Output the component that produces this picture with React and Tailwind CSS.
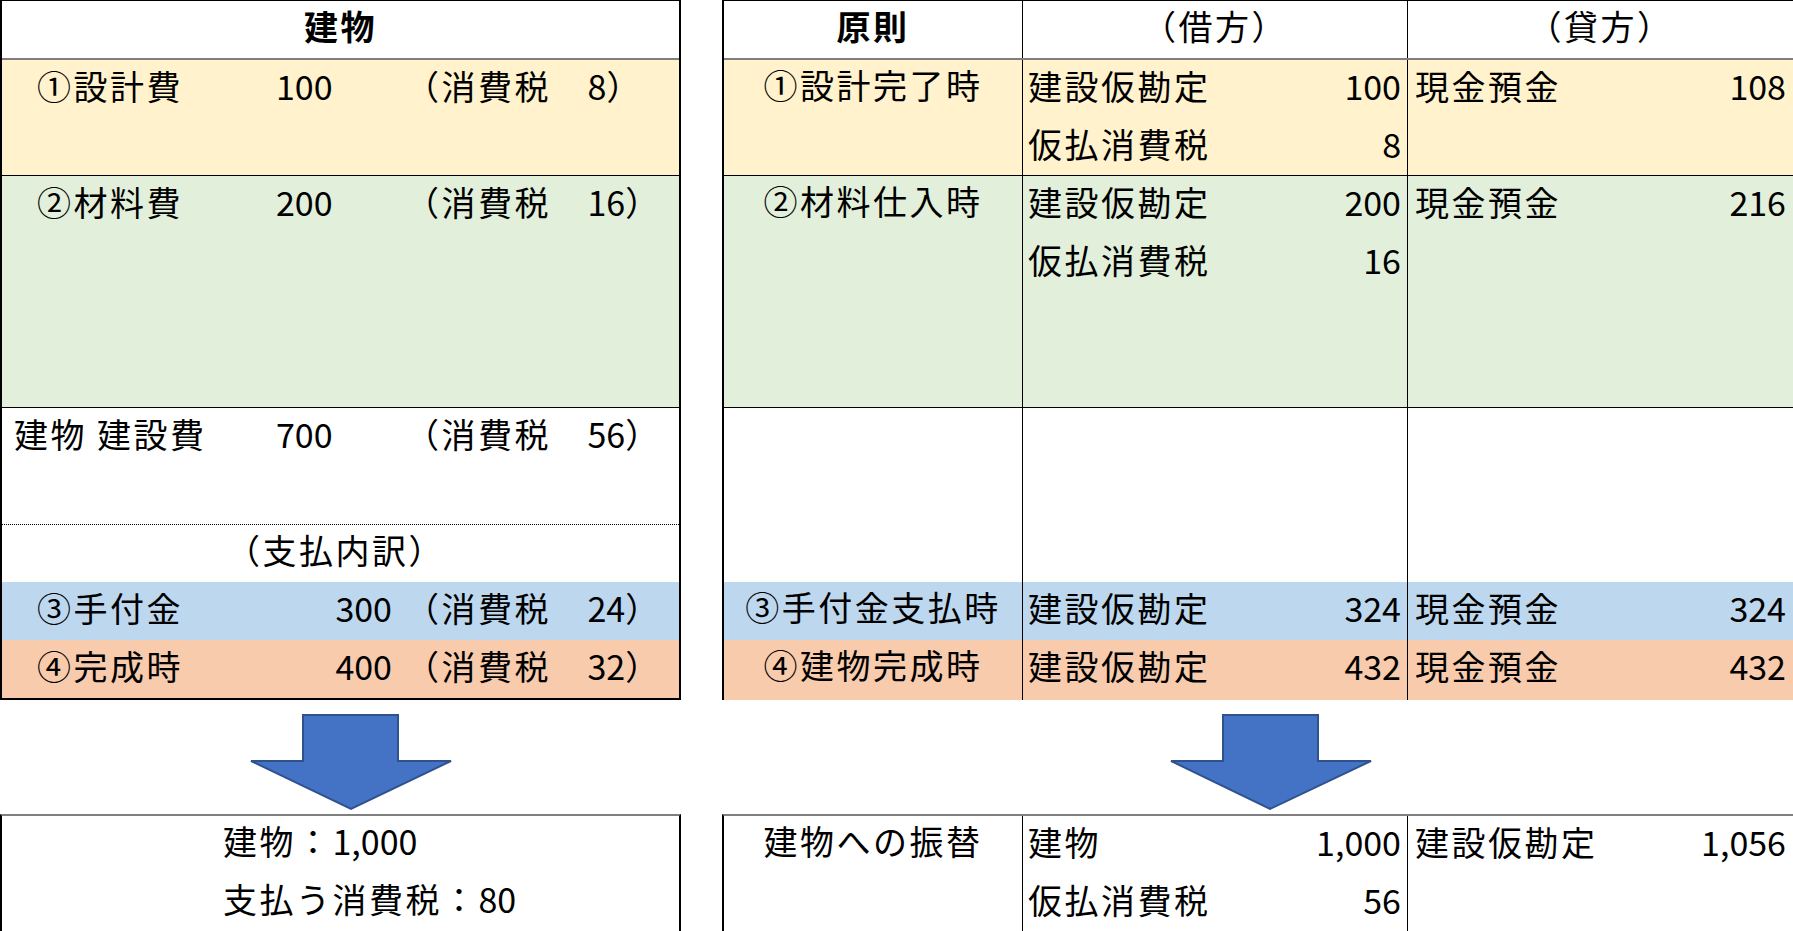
import React from "react";

function Arrow({ shaftL, shaftR, headL, headR, tip }) {
  const pts = `${shaftL},15 ${shaftR},15 ${shaftR},61 ${headR},61 ${tip},109 ${headL},61 ${shaftL},61`;
  return (
    <svg width="100%" height="100%" className="block">
      <polygon points={pts} fill="#4472C4" stroke="#2F528F" strokeWidth="2" strokeLinejoin="miter" />
    </svg>
  );
}

function Num({ children }) {
  return <span className="tracking-normal">{children}</span>;
}

function Tax({ n }) {
  return (
    <span>
      （消費税　<Num>{n}</Num>）
    </span>
  );
}

function LeftTable() {
  return (
    <div className="w-[681px] shrink-0 flex flex-col">
      <div className="border-x-2 border-t border-b-2 border-black">
        <div className="h-[59px] pb-[8px] border-b-2 border-[#7f7f7f] flex items-center justify-center font-bold bg-white">
          建物
        </div>
        <div className="h-[116px] bg-[#fff2cc] border-b border-black">
          <div className="flex h-[58px] pb-[8px] items-center">
            <span className="w-[274px] pl-[35px]">①設計費</span>
            <span className="w-[129px] tracking-normal">100</span>
            <Tax n="8" />
          </div>
        </div>
        <div className="h-[232px] bg-[#e2efda] border-b border-black">
          <div className="flex h-[58px] pb-[8px] items-center">
            <span className="w-[274px] pl-[35px]">②材料費</span>
            <span className="w-[129px] tracking-normal">200</span>
            <Tax n="16" />
          </div>
        </div>
        <div className="h-[117px] bg-white border-b border-dotted border-black">
          <div className="flex h-[58px] pb-[8px] items-center">
            <span className="w-[274px] pl-[12px]">建物 建設費</span>
            <span className="w-[129px] tracking-normal">700</span>
            <Tax n="56" />
          </div>
        </div>
        <div className="h-[57px] pb-[8px] bg-white flex items-center pl-[224px]">（支払内訳）</div>
        <div className="h-[58px] pb-[8px] bg-[#bdd7ee] flex items-center">
          <span className="w-[274px] pl-[35px]">③手付金</span>
          <span className="w-[129px] text-right pr-[13px] tracking-normal">300</span>
          <Tax n="24" />
        </div>
        <div className="h-[58px] pb-[8px] bg-[#f8cbad] flex items-center">
          <span className="w-[274px] pl-[35px]">④完成時</span>
          <span className="w-[129px] text-right pr-[13px] tracking-normal">400</span>
          <Tax n="32" />
        </div>
      </div>
      <div className="h-[114px]">
        <Arrow shaftL={303} shaftR={398} headL={251} headR={451} tip={351} />
      </div>
      <div className="flex-1 border-t-2 border-[#7f7f7f] border-x-2 border-x-black pl-[221px]">
        <div className="h-[58px] leading-[50px]">
          建物：<Num>1,000</Num>
        </div>
        <div className="h-[58px] leading-[50px]">
          支払う消費税：<Num>80</Num>
        </div>
      </div>
    </div>
  );
}

function AmtLine({ label, amt, side }) {
  return (
    <div
      className={
        "flex h-[58px] pb-[8px] items-center justify-between " +
        (side === "cr" ? "pl-[7px] pr-[7px]" : "pl-[5px] pr-[6px]")
      }
    >
      <span>{label}</span>
      <span className="tracking-normal">{amt}</span>
    </div>
  );
}

function LabelLine({ children }) {
  return <div className="h-[58px] leading-[50px] text-center">{children}</div>;
}

function RightTable() {
  return (
    <div className="w-[1073px] shrink-0 ml-[41px] flex flex-col">
      <div className="border-l-2 border-r-2 border-t border-black">
        <div className="flex h-[59px] border-b-2 border-b-[#7f7f7f] bg-white">
          <div className="w-[299px] pb-[8px] border-r border-black flex items-center justify-center font-bold">原則</div>
          <div className="w-[385px] pb-[8px] border-r border-black flex items-center justify-center">（借方）</div>
          <div className="w-[385px] pb-[8px] flex items-center justify-center">（貸方）</div>
        </div>
        <div className="flex h-[116px] bg-[#fff2cc] border-b border-black">
          <div className="w-[299px] border-r border-black">
            <LabelLine>①設計完了時</LabelLine>
          </div>
          <div className="w-[385px] border-r border-black">
            <AmtLine label="建設仮勘定" amt="100" />
            <AmtLine label="仮払消費税" amt="8" />
          </div>
          <div className="w-[385px]">
            <AmtLine label="現金預金" amt="108" side="cr" />
          </div>
        </div>
        <div className="flex h-[232px] bg-[#e2efda] border-b border-black">
          <div className="w-[299px] border-r border-black">
            <LabelLine>②材料仕入時</LabelLine>
          </div>
          <div className="w-[385px] border-r border-black">
            <AmtLine label="建設仮勘定" amt="200" />
            <AmtLine label="仮払消費税" amt="16" />
          </div>
          <div className="w-[385px]">
            <AmtLine label="現金預金" amt="216" side="cr" />
          </div>
        </div>
        <div className="flex h-[174px] bg-white">
          <div className="w-[299px] border-r border-black"></div>
          <div className="w-[385px] border-r border-black"></div>
          <div className="w-[385px]"></div>
        </div>
        <div className="flex h-[58px] bg-[#bdd7ee]">
          <div className="w-[299px] border-r border-black">
            <LabelLine>③手付金支払時</LabelLine>
          </div>
          <div className="w-[385px] border-r border-black">
            <AmtLine label="建設仮勘定" amt="324" />
          </div>
          <div className="w-[385px]">
            <AmtLine label="現金預金" amt="324" side="cr" />
          </div>
        </div>
        <div className="flex h-[60px] bg-[#f8cbad]">
          <div className="w-[299px] border-r border-black">
            <LabelLine>④建物完成時</LabelLine>
          </div>
          <div className="w-[385px] border-r border-black">
            <AmtLine label="建設仮勘定" amt="432" />
          </div>
          <div className="w-[385px]">
            <AmtLine label="現金預金" amt="432" side="cr" />
          </div>
        </div>
      </div>
      <div className="h-[114px]">
        <Arrow shaftL={501} shaftR={596} headL={449} headR={649} tip={548} />
      </div>
      <div className="flex-1 flex border-t-2 border-t-[#7f7f7f] border-l-2 border-l-black">
        <div className="w-[299px] border-r border-black">
          <LabelLine>建物への振替</LabelLine>
        </div>
        <div className="w-[385px] border-r border-black">
          <AmtLine label="建物" amt="1,000" />
          <AmtLine label="仮払消費税" amt="56" />
        </div>
        <div className="w-[385px]">
          <AmtLine label="建設仮勘定" amt="1,056" side="cr" />
        </div>
      </div>
    </div>
  );
}

export default function App() {
  return (
    <div className="w-[1793px] h-[931px] overflow-hidden bg-white text-black flex font-['Noto_Sans_CJK_JP','Noto_Sans_CJK_SC',sans-serif] text-[34px] tracking-[2.5px] whitespace-nowrap">
      <LeftTable />
      <RightTable />
    </div>
  );
}
